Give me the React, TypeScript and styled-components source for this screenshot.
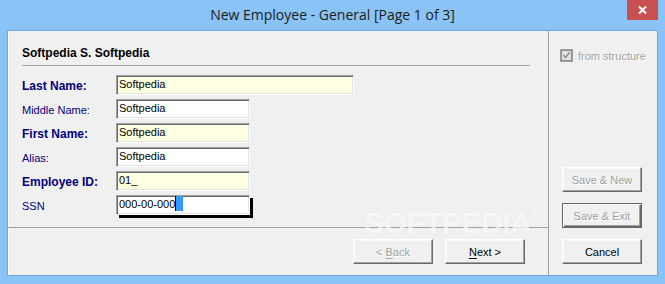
import React from 'react'
import styled, { createGlobalStyle } from 'styled-components'

const GlobalStyle = createGlobalStyle`
  html, body {
    margin: 0;
    padding: 0;
  }
  body {
    background: #8ac3f5;
    font-family: "Liberation Sans", Arial, sans-serif;
    overflow: hidden;
  }
`

const Window = styled.div`
  position: relative;
  width: 665px;
  height: 284px;
  display: flex;
  flex-direction: column;
  background: #8ac3f5;
`
const TitleBar = styled.div`
  height: 30px;
  display: grid;
  grid-template-columns: 1fr auto 1fr;
  align-items: start;
`
const Title = styled.div`
  grid-column: 2;
  line-height: 29px;
  font-family: "Open Sans", "Noto Sans", sans-serif;
  font-size: 14px;
  color: #1c1c1c;
  white-space: nowrap;
`
const CloseButton = styled.div`
  grid-column: 3;
  justify-self: end;
  margin-right: 7px;
  width: 31px;
  height: 20px;
  background: #c75050;
  display: flex;
  align-items: center;
  justify-content: center;
`
const Client = styled.div`
  flex: 1;
  margin: 0 7px 8px;
  border: 1px solid #6ea8dc;
  background: #f0f0f0;
  display: flex;
`
const Main = styled.div`
  flex: 0 0 540px;
  border-right: 1px solid #a0a0a0;
  box-shadow: inset 1px 0 #fff;
  display: flex;
  flex-direction: column;
`
const FormArea = styled.div`
  height: 196px;
  border-bottom: 1px solid #a0a0a0;
  padding: 0 18px 0 14px;
`
const Heading = styled.div`
  margin-top: 15px;
  padding-bottom: 5px;
  border-bottom: 1px solid #a0a0a0;
  font-size: 12px;
  line-height: 14px;
  font-weight: bold;
  color: #000;
`
const Fields = styled.div`
  margin-top: 9px;
  display: grid;
  grid-template-columns: 94px auto;
  grid-auto-rows: 20px;
  row-gap: 4px;
  align-items: center;
`
const Label = styled.div<{ $required?: boolean }>`
  color: #000080;
  font-size: ${(p) => (p.$required ? '12px' : '11px')};
  font-weight: ${(p) => (p.$required ? 'bold' : 'normal')};
  padding-top: 2px;
`
const Field = styled.div<{ $required?: boolean; $wide?: boolean; $focused?: boolean }>`
  box-sizing: border-box;
  width: ${(p) => (p.$wide ? '238px' : '134px')};
  height: 20px;
  background: ${(p) => (p.$required ? '#ffffe1' : '#fff')};
  border: 1px solid;
  border-color: #a0a0a0 #fff #fff #a0a0a0;
  box-shadow: inset 1px 1px #696969, inset -1px -1px #e3e3e3
    ${(p) => (p.$focused ? ', 3px 3px 0 #000' : '')};
  padding-left: 2px;
  font-size: 11px;
  line-height: 17px;
  color: #000;
  white-space: nowrap;
`
const Selection = styled.span`
  display: inline-block;
  width: 7px;
  height: 15px;
  vertical-align: -3px;
  background: #3399ff;
  border-left: 1px solid #000;
`
const Nav = styled.div`
  flex: 1;
  display: flex;
  justify-content: flex-end;
  align-items: flex-start;
  gap: 12px;
  padding: 11px 23px 0 0;
`
const Side = styled.div`
  flex: 1 1 0;
  min-width: 0;
  display: flex;
  flex-direction: column;
  padding: 18px 15px 11px 13px;
`
const CheckRow = styled.div`
  display: flex;
  align-items: center;
  gap: 5px;
  margin-left: -2px;
  font-size: 11px;
  white-space: nowrap;
  color: #a0a0a0;
  text-shadow: 1px 1px 0 #fff;
  svg {
    flex: 0 0 13px;
  }
`
const SideButtons = styled.div`
  margin-top: auto;
  display: flex;
  flex-direction: column;
  gap: 11px;
`
const Button = styled.div<{ $disabled?: boolean; $default?: boolean }>`
  box-sizing: border-box;
  flex: 0 0 auto;
  width: 80px;
  height: 25px;
  display: flex;
  align-items: center;
  justify-content: center;
  background: #f0f0f0;
  font-size: 11px;
  color: ${(p) => (p.$disabled ? '#a0a0a0' : '#000')};
  text-shadow: ${(p) => (p.$disabled ? '1px 1px 0 #fff' : 'none')};
  border: 1px solid;
  border-color: ${(p) => (p.$default ? '#646464' : '#fff #696969 #696969 #fff')};
  box-shadow: ${(p) =>
    p.$default
      ? 'inset 1px 1px #fff, inset -1px -1px #696969, inset -2px -2px #a0a0a0'
      : 'inset -1px -1px #a0a0a0, inset 1px 1px #f8f8f8'};
  u {
    text-decoration: underline;
    text-underline-offset: 2px;
  }
`
const Watermark = styled.div`
  position: absolute;
  left: 364px;
  top: 206px;
  font-size: 30px;
  font-weight: bold;
  letter-spacing: -0.5px;
  color: rgba(255, 255, 255, 0.7);
  text-shadow: 0 0 1px rgba(0, 0, 0, 0.05);
  pointer-events: none;
  sup {
    font-size: 10px;
    vertical-align: 18px;
  }
`

const fields = [
  { label: 'Last Name:', value: 'Softpedia', required: true, wide: true },
  { label: 'Middle Name:', value: 'Softpedia' },
  { label: 'First Name:', value: 'Softpedia', required: true },
  { label: 'Alias:', value: 'Softpedia' },
  { label: 'Employee ID:', value: '01_', required: true },
]

export default function App() {
  return (
    <>
      <GlobalStyle />
      <Window>
        <TitleBar>
          <Title>New Employee - General [Page 1 of 3]</Title>
          <CloseButton>
            <svg width="9" height="8" viewBox="0 0 9 8">
              <path d="M1 0.5 L8 7.5 M8 0.5 L1 7.5" stroke="#fff" strokeWidth="2" />
            </svg>
          </CloseButton>
        </TitleBar>
        <Client>
          <Main>
            <FormArea>
              <Heading>Softpedia S. Softpedia</Heading>
              <Fields>
                {fields.map((f) => (
                  <React.Fragment key={f.label}>
                    <Label $required={f.required}>{f.label}</Label>
                    <Field $required={f.required} $wide={f.wide}>
                      {f.value}
                    </Field>
                  </React.Fragment>
                ))}
                <Label>SSN</Label>
                <Field $focused>
                  000-00-000
                  <Selection />
                </Field>
              </Fields>
            </FormArea>
            <Nav>
              <Button $disabled>
                &lt;&nbsp;<u>B</u>ack
              </Button>
              <Button>
                <u>N</u>ext &gt;
              </Button>
            </Nav>
          </Main>
          <Side>
            <CheckRow>
              <svg width="13" height="13" viewBox="0 0 13 13">
                <rect x="0.5" y="0.5" width="12" height="12" fill="#fff" stroke="#a0a0a0" />
                <rect x="1.5" y="1.5" width="10" height="10" fill="#e3e3e3" stroke="#8a8a8a" />
                <path d="M3.5 6 L5.5 8.5 L9.5 3.5" fill="none" stroke="#8d8d8d" strokeWidth="1.6" />
              </svg>
              from structure
            </CheckRow>
            <SideButtons>
              <Button $disabled>Save &amp; New</Button>
              <Button $disabled $default>
                Save &amp; Exit
              </Button>
              <Button>Cancel</Button>
            </SideButtons>
          </Side>
        </Client>
        <Watermark>
          SOFTPEDIA<sup>®</sup>
        </Watermark>
      </Window>
    </>
  )
}
